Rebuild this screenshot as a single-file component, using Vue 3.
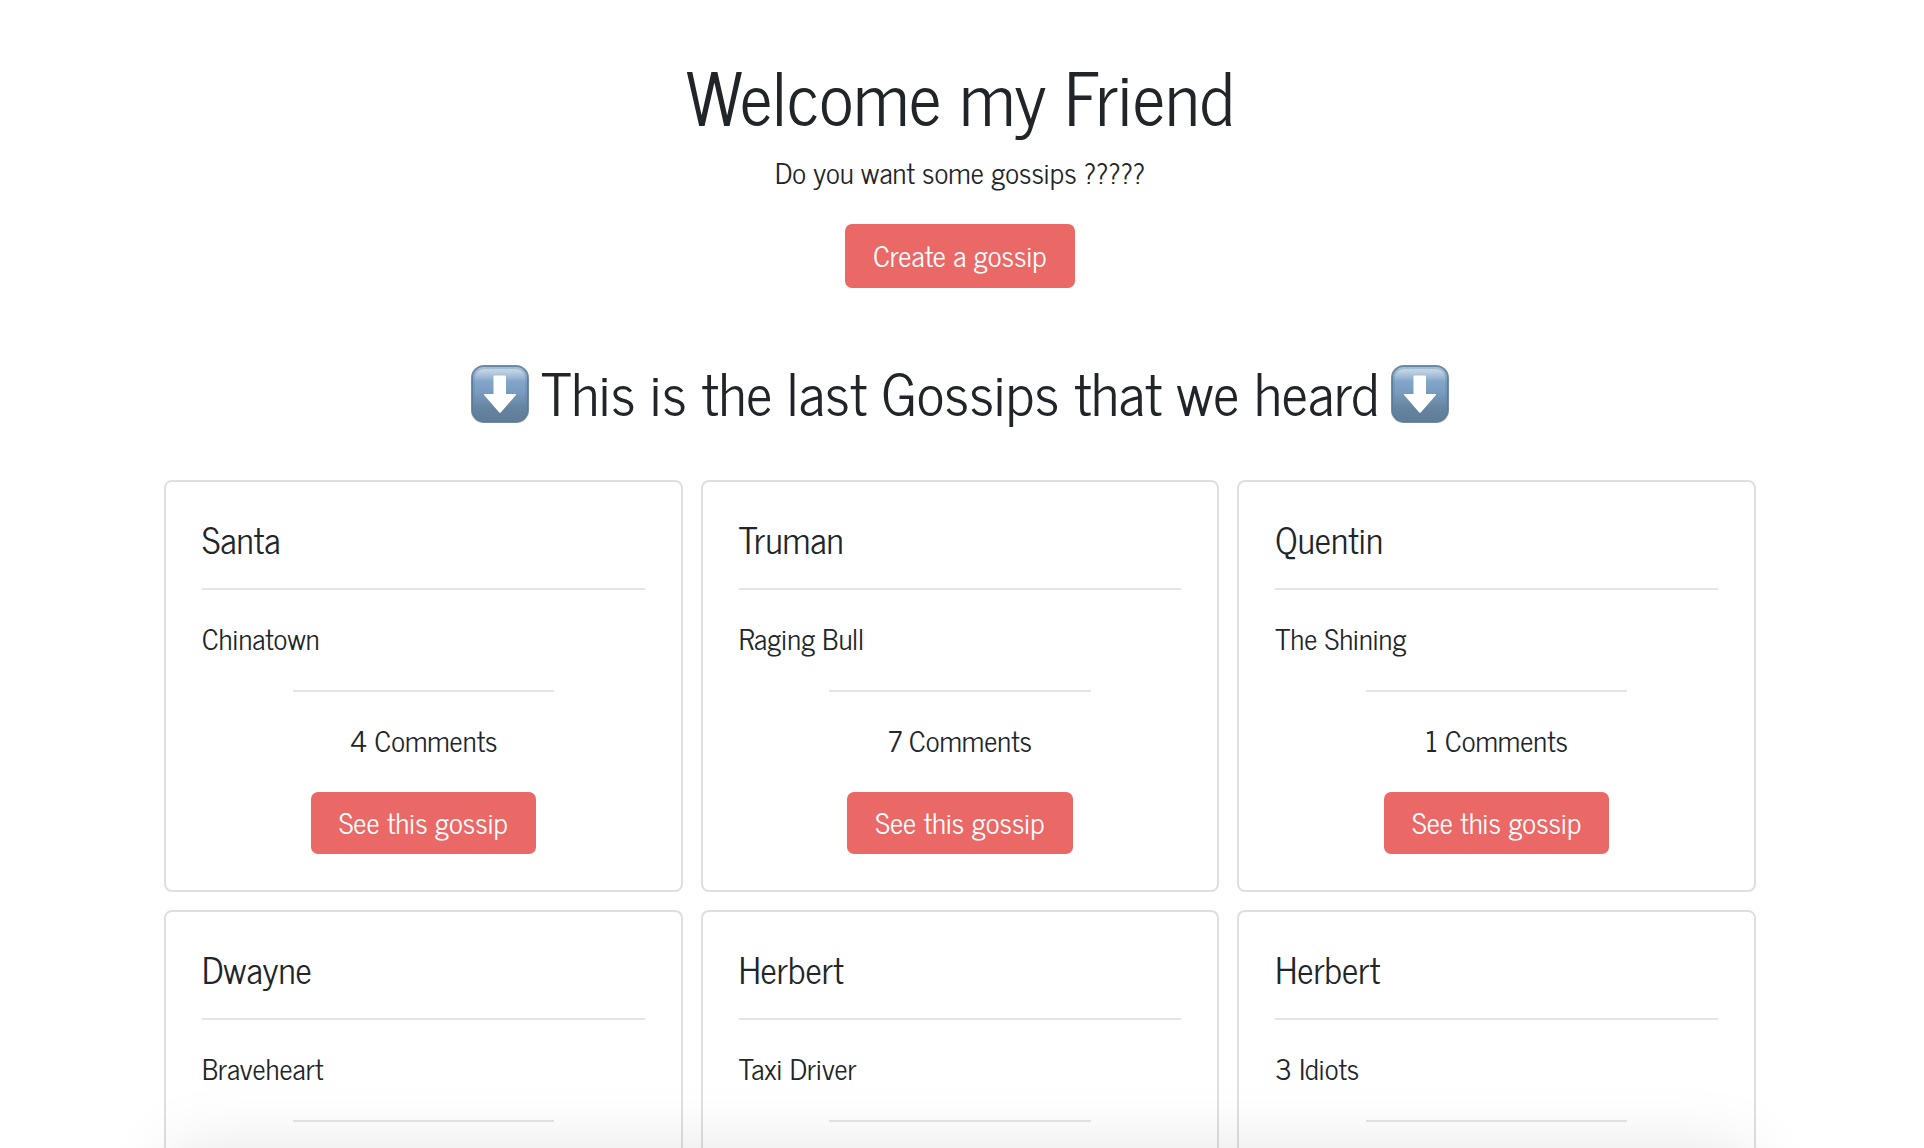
<script setup>
import { h } from 'vue'

const gossips = [
  { author: 'Santa', title: 'Chinatown', comments: 4 },
  { author: 'Truman', title: 'Raging Bull', comments: 7 },
  { author: 'Quentin', title: 'The Shining', comments: 1 },
  { author: 'Dwayne', title: 'Braveheart' },
  { author: 'Herbert', title: 'Taxi Driver' },
  { author: 'Herbert', title: '3 Idiots' },
]

// Glossy blue key with a white arrow pointing down
const DownArrow = (props) =>
  h('svg', { viewBox: '0 0 58 58', width: 58, height: 58, 'aria-hidden': 'true' }, [
    h('defs', [
      h('linearGradient', { id: props.uid + '-face', x1: 0, y1: 0, x2: 0, y2: 1 }, [
        h('stop', { offset: '0', 'stop-color': '#c3d6e5' }),
        h('stop', { offset: '0.1', 'stop-color': '#bdd1e2' }),
        h('stop', { offset: '0.28', 'stop-color': '#82a4c8' }),
        h('stop', { offset: '0.42', 'stop-color': '#7b9fc3' }),
        h('stop', { offset: '0.75', 'stop-color': '#66849f' }),
        h('stop', { offset: '1', 'stop-color': '#5f7b97' }),
      ]),
      h('linearGradient', { id: props.uid + '-rim', x1: 0, y1: 0, x2: 0, y2: 1 }, [
        h('stop', { offset: '0', 'stop-color': '#56789a' }),
        h('stop', { offset: '1', 'stop-color': '#5c7891' }),
      ]),
    ]),
    h('rect', { x: 1, y: 1, width: 56, height: 56, rx: 12, fill: `url(#${props.uid}-face)`, stroke: `url(#${props.uid}-rim)`, 'stroke-width': 2, 'stroke-opacity': 0.85 }),
    h('rect', { x: 3, y: 3, width: 52, height: 52, rx: 10, fill: 'none', stroke: '#5f83a6', 'stroke-width': 2, 'stroke-opacity': 0.3 }),
    h('path', { d: 'M23.5 10.5h10.500q1 0 1 1V29h9.200q1.600 0 .6 1.200L30 47.200q-1 1.100-2 0L13.300 30.200q-1-1.200 .6-1.200H22.500V11.500q0-1 1-1z', fill: '#fff' }),
  ])
DownArrow.props = ['uid']
</script>

<template>
  <main class="page">
    <header class="hero">
      <h1>Welcome my Friend</h1>
      <p>Do you want some gossips ?????</p>
      <a class="btn btn-create" href="#">Create a gossip</a>
    </header>

    <section>
      <h2>
        <DownArrow uid="left" />
        <span>This is the last Gossips that we heard</span>
        <DownArrow uid="right" />
      </h2>
      <div class="cards">
        <article v-for="(gossip, i) in gossips" :key="i" class="card">
          <h3>{{ gossip.author }}</h3>
          <hr />
          <p>{{ gossip.title }}</p>
          <hr class="short" />
          <template v-if="gossip.comments">
            <p class="count">{{ gossip.comments }} Comments</p>
            <a class="btn" href="#">See this gossip</a>
          </template>
        </article>
      </div>
    </section>
    <div class="bottom-shade"></div>
  </main>
</template>

<style>
body {
  margin: 0;
  background: #fff;
}
</style>

<style scoped>
.page {
  box-sizing: border-box;
  height: 100vh;
  overflow: hidden;
  padding: 50px 168px 0 164px;
  font-family: "News Cycle", "Arial Narrow", "Liberation Sans", sans-serif;
  font-size: 29px;
  line-height: 48px;
  color: #212529;
}
h1, h2, h3, p, hr {
  margin: 0;
  font-weight: 400;
}
.hero {
  display: flex;
  flex-direction: column;
  align-items: center;
}
h1 {
  font-size: 72px;
  line-height: 90px;
}
p {
  padding-bottom: 4px;
  line-height: 44px;
}
.hero p {
  margin: 10px 0 26px;
}
.btn {
  box-sizing: border-box;
  align-self: center;
  padding: 6px 28px 8px;
  border-radius: 7px;
  background: #ea6967;
  color: #fff;
  text-decoration: none;
}
.btn-create {
  padding: 7px 28px 9px;
}
h2 {
  display: flex;
  justify-content: center;
  align-items: center;
  gap: 12px;
  margin: 70px 0 50px;
  font-size: 58px;
  line-height: 66px;
}
h2 span {
  padding-bottom: 6px;
}
h2 svg {
  flex: none;
}
.cards {
  display: grid;
  grid-template-columns: repeat(3, 1fr);
  grid-auto-rows: minmax(412px, auto);
  gap: 18px;
}
.card {
  display: flex;
  flex-direction: column;
  gap: 26px;
  box-sizing: border-box;
  padding: 36px;
  border: 2px solid #dfdfdf;
  border-radius: 8px;
}
h3 {
  padding-bottom: 2px;
  font-size: 36px;
  line-height: 42px;
}
hr {
  width: 100%;
  height: 2px;
  border: 0;
  background: #e5e5e5;
}
hr.short {
  width: 59%;
  align-self: center;
}
.count {
  text-align: center;
}
.bottom-shade {
  position: fixed;
  top: 100vh;
  left: 168px;
  right: 172px;
  height: 200px;
  border-radius: 20px;
  box-shadow: 0 0 68px rgba(0, 0, 0, 0.1);
  pointer-events: none;
}
</style>
